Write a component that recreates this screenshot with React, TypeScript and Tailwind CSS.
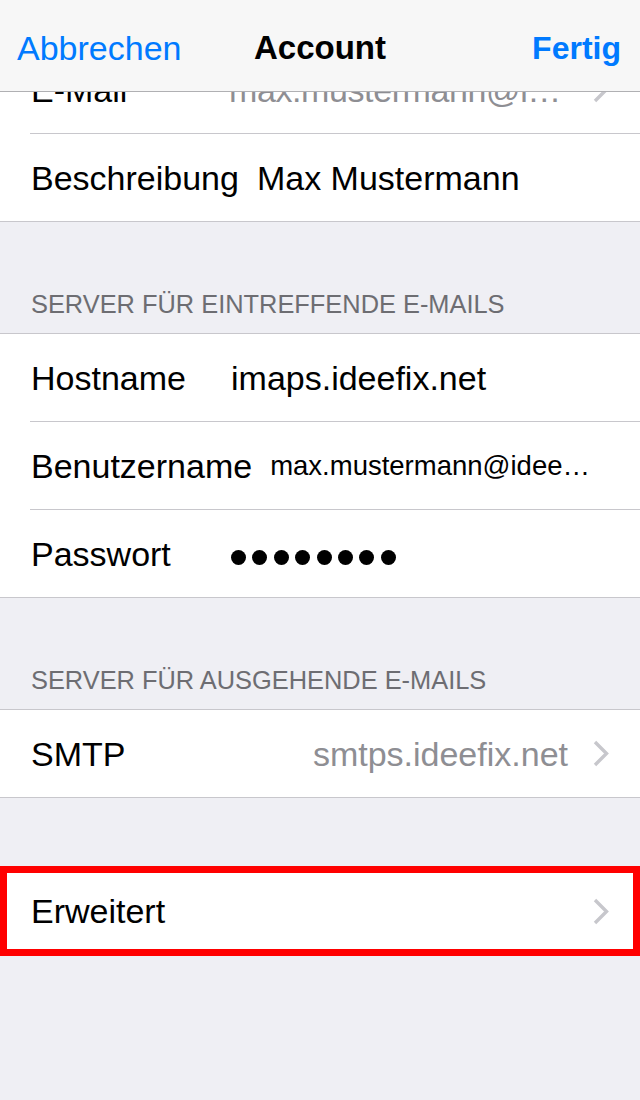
import React from "react";

const FONT = { fontFamily: '"Liberation Sans", Arial, Helvetica, sans-serif' };

function Chevron() {
  return (
    <svg width="16" height="27" viewBox="0 0 16 27" className="shrink-0">
      <polyline
        points="2,2 13.5,13.5 2,25"
        fill="none"
        stroke="#c7c7cc"
        strokeWidth="3.4"
        strokeLinecap="butt"
        strokeLinejoin="miter"
      />
    </svg>
  );
}

function Separator() {
  return <div className="h-px ml-[30px] bg-[#c8c7cc]" />;
}

function FieldRow({
  label,
  children,
}: {
  label: string;
  children: React.ReactNode;
}) {
  return (
    <div className="h-[87px] flex items-center pl-[31px] pr-[31px]">
      <span className="min-w-[182px] mr-[18px] text-[34px] leading-[34px] text-black whitespace-nowrap">
        {label}
      </span>
      {children}
    </div>
  );
}

function LinkRow({ label, value }: { label: string; value?: string }) {
  return (
    <div className="h-[87px] flex items-center pl-[31px] pr-[31px]">
      <span className="text-[34px] leading-[34px] text-black whitespace-nowrap">{label}</span>
      <span className="flex-1 text-right text-[34px] leading-[34px] text-[#8e8e93] whitespace-nowrap mr-[25px]">
        {value}
      </span>
      <Chevron />
    </div>
  );
}

function SectionHeader({ title }: { title: string }) {
  return (
    <div className="h-[111px] flex items-end pl-[31px] pb-[16px]">
      <span className="text-[25.4px] leading-[26px] text-[#6d6d72] uppercase whitespace-nowrap">
        {title}
      </span>
    </div>
  );
}

function PasswordDots({ count }: { count: number }) {
  return (
    <div className="flex gap-[6.4px] mt-[7px]" aria-label="Passwort">
      {Array.from({ length: count }).map((_, i) => (
        <span key={i} className="block w-[15px] h-[15px] rounded-full bg-black" />
      ))}
    </div>
  );
}

export default function App() {
  return (
    <div className="relative w-[640px] h-[1100px] overflow-hidden bg-[#efeff4]" style={FONT}>
      {/* scrolled settings list */}
      <div className="pt-[46px]">
        <div className="bg-white border-b border-[#c8c7cc]">
          <div className="h-[87px] flex items-center pl-[31px] pr-[31px]">
            <span className="min-w-[182px] mr-[16px] text-[34px] leading-[34px] text-black whitespace-nowrap">
              E-Mail
            </span>
            <span className="flex-1 text-[34px] leading-[34px] text-[#8e8e93] whitespace-nowrap overflow-hidden tracking-[-0.4px]">
              max.mustermann@i…
            </span>
            <span className="ml-[20px]">
              <Chevron />
            </span>
          </div>
          <Separator />
          <FieldRow label="Beschreibung">
            <span className="text-[34px] leading-[34px] text-black whitespace-nowrap">
              Max Mustermann
            </span>
          </FieldRow>
        </div>

        <SectionHeader title="Server für eintreffende E-Mails" />
        <div className="bg-white border-y border-[#c8c7cc]">
          <FieldRow label="Hostname">
            <span className="text-[34px] leading-[34px] text-black whitespace-nowrap">
              imaps.ideefix.net
            </span>
          </FieldRow>
          <Separator />
          <FieldRow label="Benutzername">
            <span className="text-[27.5px] leading-[28px] text-black whitespace-nowrap">
              max.mustermann@idee…
            </span>
          </FieldRow>
          <Separator />
          <FieldRow label="Passwort">
            <PasswordDots count={8} />
          </FieldRow>
        </div>

        <SectionHeader title="Server für ausgehende E-Mails" />
        <div className="bg-white border-y border-[#c8c7cc]">
          <LinkRow label="SMTP" value="smtps.ideefix.net" />
        </div>

        <div className="h-[68px]" />
        <div className="bg-white border-[7px] border-[#ff0000] h-[90px] flex items-center pl-[24px] pr-[24px]">
          <span className="flex-1 text-[34px] leading-[34px] text-black whitespace-nowrap">
            Erweitert
          </span>
          <Chevron />
        </div>
      </div>

      {/* navigation bar overlays the scrolled list */}
      <div className="absolute top-0 inset-x-0 h-[92px] bg-[#f7f7f7] border-b border-[#b0b0b3] grid grid-cols-[1fr_auto_1fr] items-center pt-[5px] px-[17px]">
        <span className="text-[34px] leading-[34px] text-[#007aff] whitespace-nowrap">
          Abbrechen
        </span>
        <span className="text-[33px] leading-[34px] font-bold text-black whitespace-nowrap">
          Account
        </span>
        <span className="text-right pr-[2px] text-[32px] leading-[34px] font-bold text-[#007aff] whitespace-nowrap">
          Fertig
        </span>
      </div>
    </div>
  );
}
